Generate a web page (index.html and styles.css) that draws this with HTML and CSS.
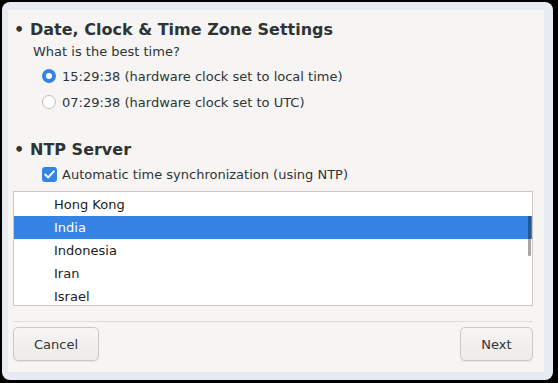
FILE: index.html
```html
<!DOCTYPE html>
<html lang="en">
<head>
  <meta charset="UTF-8" />
  <title>Date &amp; Time</title>
  <link rel="stylesheet" href="styles.css">
</head>
<body>
  <div class="window">
    <div class="content">
      <div class="section-title"><span class="bullet">•</span>Date, Clock &amp; Time Zone Settings</div>
      <div class="question">What is the best time?</div>
      <label class="option">
        <span class="radio checked"></span>15:29:38 (hardware clock set to local time)
      </label>
      <label class="option">
        <span class="radio"></span>07:29:38 (hardware clock set to UTC)
      </label>

      <div class="section-title ntp"><span class="bullet">•</span>NTP Server</div>
      <label class="check-row">
        <span class="checkbox">
          <svg width="11" height="9" viewBox="0 0 11 9"><path d="M1.2 4.6 L4.2 7.4 L9.8 1.4" fill="none" stroke="#fff" stroke-width="2" stroke-linecap="round" stroke-linejoin="round"/></svg>
        </span>Automatic time synchronization (using NTP)
      </label>

      <div class="list-box">
        <div class="list-row">Hong Kong</div>
        <div class="list-row selected">India</div>
        <div class="list-row">Indonesia</div>
        <div class="list-row">Iran</div>
        <div class="list-row">Israel</div>
        <div class="scrollbar"></div>
      </div>

      <div class="separator"></div>

      <div class="buttons">
        <button class="btn cancel">Cancel</button>
        <button class="btn next">Next</button>
      </div>
    </div>
  </div>
</body>
</html>
```

FILE: styles.css
```css
* { box-sizing: border-box; }
body {
  margin: 0;
  background: #000;
  font-family: "DejaVu Sans", sans-serif;
  color: #2e3436;
  height: 383px;
  overflow: hidden;
}
.window {
  margin: 2px 0 0 2px;
  width: 551px;
  height: 378px;
  border-radius: 8px;
  background: #e8ecf2;
  padding: 8px 9px 8px 6px;
}
.content {
  background: #f6f5f4;
  height: 100%;
  padding: 10px 11px 0 5px;
  display: flex;
  flex-direction: column;
}
.section-title {
  display: flex;
  align-items: center;
  font-size: 16px;
  font-weight: bold;
  line-height: 20px;
  height: 20px;
}
.bullet { width: 12px; margin-right: 5px; text-align: center; }
.question {
  font-size: 13px;
  line-height: 18px;
  margin: 3px 0 2px 20px;
}
.option, .check-row {
  display: flex;
  align-items: center;
  font-size: 13px;
  height: 26px;
  margin-left: 29px;
}
.radio {
  width: 14px;
  height: 14px;
  border-radius: 50%;
  border: 1px solid #c0bdb8;
  background: #fff;
  margin-right: 6px;
}
.radio.checked {
  border: 4px solid #3584e4;
  background: #fff;
}
.section-title.ntp { margin-top: 25px; }
.check-row { height: 22px; margin-top: 3px; }
.checkbox {
  width: 15px;
  height: 15px;
  border-radius: 3px;
  background: #3584e4;
  display: flex;
  align-items: center;
  justify-content: center;
  margin-right: 5px;
}
.list-box {
  position: relative;
  margin-top: 6px;
  height: 115px;
  border: 1px solid #cdc7c2;
  background: #fff;
  padding-top: 1px;
  overflow: hidden;
}
.list-row {
  height: 23px;
  line-height: 23px;
  padding-left: 40px;
  font-size: 13px;
  color: #1c1c1c;
}
.list-row.selected { background: #3584e4; color: #fff; }
.scrollbar {
  position: absolute;
  right: 1px;
  top: 24px;
  width: 3px;
  height: 40px;
  border-radius: 1px;
  background: rgba(0, 0, 0, 0.35);
}
.separator {
  margin-top: 15px;
  height: 1px;
  background: #dedbd7;
}
.buttons {
  display: flex;
  justify-content: space-between;
  margin-top: 5px;
}
.btn {
  height: 34px;
  border: 1px solid #cdc7c2;
  border-radius: 5px;
  background: linear-gradient(#f6f5f4, #edebe9);
  font-family: "DejaVu Sans", sans-serif;
  font-size: 13px;
  color: #2e3436;
  box-shadow: 0 1px 1px rgba(0, 0, 0, 0.07);
}
.cancel { width: 86px; }
.next { width: 73px; }
```
